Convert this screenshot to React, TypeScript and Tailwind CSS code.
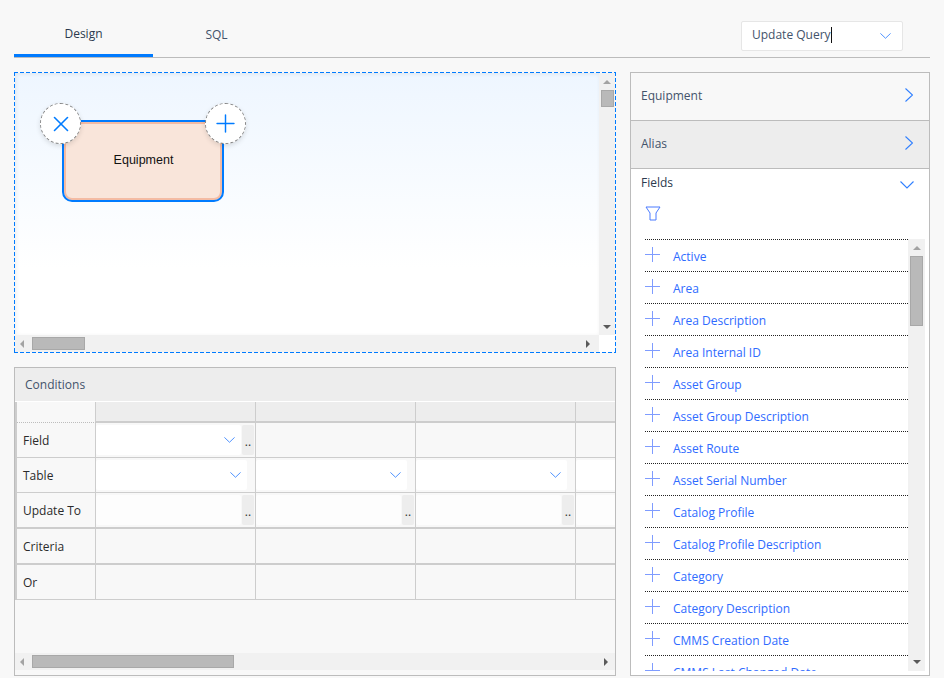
import { Plus, X } from 'lucide-react';

const FIELDS = [
  'Active',
  'Area',
  'Area Description',
  'Area Internal ID',
  'Asset Group',
  'Asset Group Description',
  'Asset Route',
  'Asset Serial Number',
  'Catalog Profile',
  'Catalog Profile Description',
  'Category',
  'Category Description',
  'CMMS Creation Date',
  'CMMS Last Changed Date',
];

const COLUMNS = [0, 1, 2, 3];

function Arrow({ dir }: { dir: 'up' | 'down' | 'left' | 'right' }) {
  const points = {
    up: '1,7 9,7 5,3',
    down: '1,3 9,3 5,7',
    left: '7,1 7,9 3,5',
    right: '3,1 3,9 7,5',
  }[dir];
  const fill = dir === 'up' || dir === 'left' ? 'fill-[#a3a3a3]' : 'fill-[#5a5a5a]';
  return (
    <svg width="10" height="10" viewBox="0 0 10 10" className={`shrink-0 ${fill}`}>
      <polygon points={points} />
    </svg>
  );
}

function ChevronDownThin({ width, height }: { width: number; height: number }) {
  return (
    <svg width={width} height={height} viewBox="0 0 14 8" preserveAspectRatio="none" fill="none" className="shrink-0">
      <path d="M0.5 0.5L7 7L13.5 0.5" stroke="#2f7fff" strokeWidth="1.1" />
    </svg>
  );
}

function ChevronRightThin() {
  return (
    <svg width="8" height="14" viewBox="0 0 8 14" fill="none" className="mb-[3px] shrink-0">
      <path d="M0.5 0.5L7.5 7L0.5 13.5" stroke="#2f7fff" strokeWidth="1.1" />
    </svg>
  );
}

function DotsButton() {
  return (
    <div className="flex h-[30px] w-3 shrink-0 items-end justify-center rounded-[2px] bg-[#ededed] pb-[6px] text-xs leading-[14px] text-[#333]">
      ..
    </div>
  );
}

function SelectBox({ width, chevron = true }: { width: string; chevron?: boolean }) {
  return (
    <div className={`flex h-[30px] items-center justify-end rounded-[2px] bg-white pr-[6px] ${width}`}>
      {chevron && <ChevronDownThin width={11} height={6} />}
    </div>
  );
}

function Cell({ children, last }: { children?: React.ReactNode; last?: boolean }) {
  return (
    <div
      className={`flex h-full shrink-0 items-center gap-px border-r border-[#cdcdcd] ${last ? 'w-[40px] border-r-0' : 'w-[160px]'}`}
    >
      {children}
    </div>
  );
}

function ConditionRow({
  label,
  heightClass,
  borderClass,
  render,
}: {
  label: string;
  heightClass: string;
  borderClass: string;
  render?: (col: number) => React.ReactNode;
}) {
  return (
    <div className={`flex border-[#cdcdcd] ${heightClass} ${borderClass}`}>
      <div className="flex w-[79px] shrink-0 items-center border-r border-[#cdcdcd] pt-[2px] pl-[6px] text-xs text-[#2b2b2b]">
        {label}
      </div>
      {COLUMNS.map((col) => (
        <Cell key={col} last={col === 3}>
          {render?.(col)}
        </Cell>
      ))}
    </div>
  );
}

function Designer() {
  return (
    <div className="flex h-[281px] flex-col bg-no-repeat p-px [background-image:repeating-linear-gradient(90deg,#007bff_0_4px,transparent_4px_6px),repeating-linear-gradient(90deg,#007bff_0_4px,transparent_4px_6px),repeating-linear-gradient(180deg,#007bff_0_4px,transparent_4px_6px),repeating-linear-gradient(180deg,#007bff_0_4px,transparent_4px_6px)] [background-position:0_0,0_100%,0_0,100%_0] [background-size:100%_1px,100%_1px,1px_100%,1px_100%]">
      <div className="flex min-h-0 flex-1 flex-col bg-gradient-to-b from-[#eef6ff] to-white to-70%">
        <div className="flex min-h-0 flex-1">
          <div className="relative flex-1 shadow-[inset_1px_1px_4px_rgba(0,0,0,0.07)]">
            <div className="absolute top-[47px] left-[47px] flex h-[82px] w-[162px] items-center justify-center rounded-t-[3px] rounded-b-[10px] border-2 border-[#007bff] bg-[#f9e5da] font-['Liberation_Sans',sans-serif] text-[12.5px] text-[#111] shadow-[inset_0_0_0_2px_#f4bba3]">
              <span className="mb-px ml-px">Equipment</span>
            </div>
            <div className="absolute top-[30px] left-[25px] flex h-[41px] w-[41px] items-center justify-center rounded-full border border-dashed border-[#888] bg-white shadow-[0_2px_5px_rgba(0,0,0,0.12)]">
              <X size={26} strokeWidth={1.5} className="text-[#007bff]" />
            </div>
            <div className="absolute top-[30px] left-[190px] flex h-[41px] w-[41px] items-center justify-center rounded-full border border-dashed border-[#888] bg-white shadow-[0_2px_5px_rgba(0,0,0,0.12)]">
              <Plus size={29} strokeWidth={1.2} className="text-[#007bff]" />
            </div>
          </div>
          <div className="flex w-4 flex-col items-center bg-[#f1f1f1] pt-[4px] pb-[3px]">
            <Arrow dir="up" />
            <div className="mt-[3px] h-[17px] w-[13px] border border-[#a8a8a8] bg-[#b9b9b9]" />
            <div className="flex-1" />
            <Arrow dir="down" />
          </div>
        </div>
        <div className="flex h-[17px] shrink-0">
          <div className="flex flex-1 items-center bg-[#f1f1f1] pr-[6px] pl-[2px]">
            <Arrow dir="left" />
            <div className="ml-[5px] h-[13px] w-[53px] border border-[#a8a8a8] bg-[#b9b9b9]" />
            <div className="flex-1" />
            <Arrow dir="right" />
          </div>
          <div className="w-4 bg-white" />
        </div>
      </div>
    </div>
  );
}

function Conditions() {
  return (
    <div className="flex h-[309px] flex-col border border-[#bcbcbc]">
      <div className="flex h-[34px] shrink-0 items-center border-b border-white bg-[#ededed] pl-[10px] text-xs text-[#43536b]">
        Conditions
      </div>
      <div className="min-h-0 flex-1">
        <div className="overflow-hidden border-l-2 border-[#cdcdcd]">
          <div className="flex h-[21px]">
            <div className="w-[79px] shrink-0 border-r border-b border-dotted border-r-[#cdcdcd] border-b-[#bdbdbd] bg-[#f8f8f8] [border-right-style:solid]" />
            {COLUMNS.map((col) => (
              <div key={col} className="shrink-0 border-b-2 border-[#cdcdcd] bg-[#ededed]">
                <Cell last={col === 3} />
              </div>
            ))}
          </div>
          <ConditionRow
            label="Field"
            heightClass="h-[35px]"
            borderClass="border-b"
            render={(col) =>
              col === 0 ? (
                <>
                  <SelectBox width="w-[145px]" />
                  <DotsButton />
                </>
              ) : null
            }
          />
          <ConditionRow
            label="Table"
            heightClass="h-[35px]"
            borderClass="border-b"
            render={(col) =>
              col === 3 ? <SelectBox width="w-[40px]" chevron={false} /> : <SelectBox width="w-[151px]" />
            }
          />
          <ConditionRow
            label="Update To"
            heightClass="h-[36px]"
            borderClass="border-b-2"
            render={(col) =>
              col === 3 ? (
                <div className="h-[30px] w-[40px] rounded-[2px] bg-[#fdfdfd]" />
              ) : (
                <>
                  <div className="h-[30px] w-[145px] rounded-[2px] bg-[#fdfdfd]" />
                  <DotsButton />
                </>
              )
            }
          />
          <ConditionRow label="Criteria" heightClass="h-[36px]" borderClass="border-b-2" />
          <ConditionRow label="Or" heightClass="h-[35px]" borderClass="border-b" />
        </div>
      </div>
      <div className="mb-[5px] flex h-[17px] shrink-0 items-center bg-[#f1f1f1] pr-[4px] pl-[2px]">
        <Arrow dir="left" />
        <div className="ml-[5px] h-[13px] w-[202px] border border-[#a8a8a8] bg-[#b9b9b9]" />
        <div className="flex-1" />
        <Arrow dir="right" />
      </div>
    </div>
  );
}

function AccordionHeader({ title, shaded }: { title: string; shaded?: boolean }) {
  return (
    <div
      className={`flex h-[48px] shrink-0 items-center justify-between border-b border-[#bcbcbc] pr-[16px] pl-[10px] text-xs text-[#43536b] ${shaded ? 'bg-[#ededed]' : ''}`}
    >
      <span className="mb-[2px]">{title}</span>
      <ChevronRightThin />
    </div>
  );
}

function FieldsPanel() {
  return (
    <div className="flex min-h-0 flex-1 flex-col bg-white">
      <div className="flex h-[28px] shrink-0 items-center justify-between pr-[15px] pl-[10px] text-xs font-medium text-[#2c3a4e]">
        Fields
        <span className="mt-[4px]">
          <ChevronDownThin width={14} height={8} />
        </span>
      </div>
      <div className="h-[42px] shrink-0 pt-[8px] pl-[14px]">
        <svg width="17" height="17" viewBox="0 0 17 17" fill="none" stroke="#4a7bff" strokeWidth="1">
          <path d="M1 2h14L11 8v7H5V8z" />
        </svg>
      </div>
      <div className="flex min-h-0 flex-1 pr-[4px] pb-[4px] pl-[14px]">
        <div className="min-w-0 flex-1 overflow-hidden border-t border-dotted border-[#222]">
          {FIELDS.map((field) => (
            <div
              key={field}
              className="flex h-[32px] shrink-0 items-center border-b border-dotted border-[#222] text-xs text-[#2f6bff]"
            >
              <svg width="15" height="15" viewBox="0 0 15 15" fill="none" stroke="#7f9cff" strokeWidth="1" className="mb-[3px] shrink-0">
                <path d="M0 7.5h15M7.5 0v15" />
              </svg>
              <span className="ml-[13px] pt-[2px]">{field}</span>
            </div>
          ))}
        </div>
        <div className="flex w-[17px] shrink-0 flex-col items-center bg-[#f1f1f1] pt-[4px] pb-[4px]">
          <Arrow dir="up" />
          <div className="mt-[3px] h-[70px] w-[13px] border border-[#a8a8a8] bg-[#b9b9b9]" />
          <div className="flex-1" />
          <Arrow dir="down" />
        </div>
      </div>
    </div>
  );
}

export default function App() {
  return (
    <div className="h-[678px] w-[944px] overflow-hidden bg-[#f8f8f8] pl-[14px] font-['Open_Sans',sans-serif]">
      <div className="flex h-[58px] w-[916px] items-stretch border-b border-[#bcbcbc]">
        <div className="flex h-[57px] w-[139px] items-center justify-center border-b-[3px] border-[#007bff] pt-[14px] text-xs text-[#2c3a4e]">
          Design
        </div>
        <div className="flex w-[127px] items-center justify-center pt-[12px] text-xs text-[#43536b]">SQL</div>
        <div className="flex-1" />
        <div className="mt-[21px] mr-[27px] flex h-[30px] w-[162px] items-center justify-between rounded-[2px] border border-[#e6e6e6] bg-white pr-[11px] pl-[10px] text-xs text-[#43536b]">
          <span className="mb-[2px] border-r border-[#111]">Update Query</span>
          <ChevronDownThin width={11} height={6} />
        </div>
      </div>
      <div className="mt-[14px] flex gap-[14px]">
        <div className="flex w-[602px] shrink-0 flex-col gap-[14px]">
          <Designer />
          <Conditions />
        </div>
        <div className="flex h-[604px] w-[300px] shrink-0 flex-col border border-[#bcbcbc]">
          <AccordionHeader title="Equipment" />
          <AccordionHeader title="Alias" shaded />
          <FieldsPanel />
        </div>
      </div>
    </div>
  );
}
